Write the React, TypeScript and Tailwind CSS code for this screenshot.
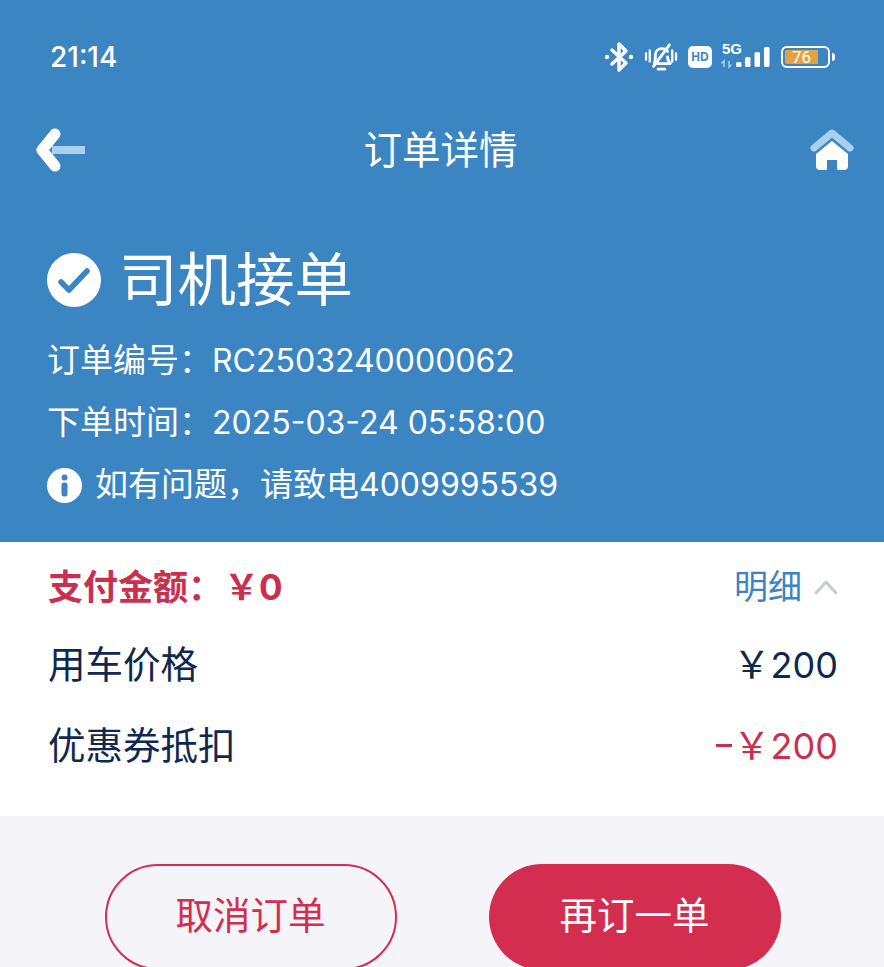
import React from 'react';

const StatusIcons = () => (
  <div className="flex items-center">
    {/* bluetooth */}
    <svg width="30" height="32" viewBox="0 0 30 32" fill="none" stroke="#fff" strokeWidth="3.4" strokeLinecap="round" strokeLinejoin="round">
      <path d="M8 9 22 22 15 29V3l7 7L8 23" />
      <circle cx="3" cy="16" r="2.2" fill="#fff" stroke="none" />
      <circle cx="27" cy="16" r="2.2" fill="#fff" stroke="none" />
    </svg>
    {/* muted bell */}
    <svg className="ml-[10px]" width="34" height="30" viewBox="0 0 36 32" fill="none" stroke="#fff" strokeWidth="3" strokeLinecap="round" strokeLinejoin="round">
      <path d="M2 12v7M6 9v12M34 12v7M30 9v12" strokeWidth="2.4" />
      <path d="M11 22c1-2 1-5 1-8 0-4 3-7 7-7 3 0 5 1 6 3M25 16c0 3 1 5 3 7H14" />
      <path d="M27 3 10 26" />
      <path d="M15 29h7" />
    </svg>
    <div className="ml-[10px] flex h-[22px] w-[24px] items-center justify-center rounded-[5px] bg-white text-[12px] leading-none font-extrabold text-[#3b85c3] [font-family:'Liberation_Sans',sans-serif]">
      HD
    </div>
    <div className="relative ml-[9px] h-[28px] w-[50px]">
      <span className="absolute top-[-2px] left-[1px] text-[15px] leading-[16px] font-bold text-white [font-family:'Liberation_Sans',sans-serif]">5G</span>
      <svg className="absolute top-0 left-0" width="50" height="28" viewBox="0 0 50 28" fill="#fff">
        <rect x="15" y="19" width="5.5" height="5" rx="1.5" />
        <rect x="24" y="14" width="5.5" height="10" rx="1.5" />
        <rect x="33.5" y="9" width="5.5" height="15" rx="1.5" />
        <rect x="43" y="4" width="5.5" height="20" rx="1.5" />
        <path d="M3 24v-6l-2.500 2.500M8 18v6l2.500-2.500" stroke="#fff" strokeOpacity="0.55" fill="none" strokeWidth="1.6" />
      </svg>
    </div>
    <div className="ml-[10px] flex h-[22px] w-[49px] items-center rounded-[6px] border-2 border-white p-[2px]">
      <div className="flex h-full w-[33px] items-center justify-center rounded-l-[2px] bg-[#e0a245] text-[17px] leading-none text-white [font-family:'Roboto',sans-serif]">
        76
      </div>
    </div>
    <div className="ml-[2px] h-[8px] w-[3px] rounded-r-full bg-white" />
  </div>
);

const Row = ({ label, children }: { label: string; children: React.ReactNode }) => (
  <div className="flex h-[81px] items-center justify-between text-[37.5px] leading-none">
    <span className="text-[#0f2850]">{label}</span>
    {children}
  </div>
);

export default function App() {
  return (
    <div className="flex h-[967px] flex-col overflow-hidden bg-[#f4f4f9] [font-family:'Inter','Noto_Sans_CJK_SC',sans-serif]">
      <header className="h-[542px] shrink-0 bg-[#3b85c3] text-white">
        <div className="flex h-[114px] items-center justify-between pr-[49px] pl-[50px]">
          <span className="text-[28px] leading-none font-medium">21:14</span>
          <StatusIcons />
        </div>

        <div className="grid h-[72px] grid-cols-[1fr_auto_1fr] items-center pr-[30px] pl-[27px]">
          <svg width="58" height="50" viewBox="0 0 58 50">
            <path d="M28 9 15 25l13 16" fill="none" stroke="#fff" strokeWidth="11" strokeLinecap="round" strokeLinejoin="round" />
            <rect x="25" y="21" width="33" height="8" fill="#a9d0ec" />
          </svg>
          <h1 className="text-[38.5px] leading-none font-normal">订单详情</h1>
          <svg className="justify-self-end" width="44" height="44" viewBox="0 0 44 44">
            <path d="M4 20 22 5l18 15" fill="none" stroke="#a9d0ec" strokeWidth="7" strokeLinecap="round" strokeLinejoin="round" />
            <path d="M22 13 38 26v12a4 4 0 0 1-4 4H27V32h-10v10H10a4 4 0 0 1-4-4V26z" fill="#fff" />
          </svg>
        </div>

        <div className="mt-[65px] flex items-center pl-[47px]">
          <svg width="54" height="54" viewBox="0 0 54 54">
            <circle cx="27" cy="27" r="27" fill="#fff" />
            <path d="M14 29l8 8 18-19" fill="none" stroke="#3b85c3" strokeWidth="5.5" strokeLinecap="round" strokeLinejoin="round" />
          </svg>
          <h2 className="ml-[18px] text-[58.5px] leading-none font-normal">司机接单</h2>
        </div>

        <div className="mt-[19px] flex flex-col pl-[47px] text-[33px]">
          <p className="h-[62px] leading-[62px]">订单编号：<span className="text-[32px]">RC2503240000062</span></p>
          <p className="h-[63px] leading-[63px]">下单时间：<span className="text-[32px]">2025-03-24 05:58:00</span></p>
          <div className="flex h-[63px] items-center">
            <svg width="35" height="35" viewBox="0 0 35 35">
              <circle cx="17.5" cy="17.5" r="17.5" fill="#fff" />
              <circle cx="17.5" cy="9.500" r="3" fill="#3b85c3" />
              <rect x="14.5" y="14.5" width="6" height="14" rx="2.5" fill="#3b85c3" />
            </svg>
            <span className="ml-[13px]">如有问题，请致电<span className="text-[32px]">4009995539</span></span>
          </div>
        </div>
      </header>

      <section className="h-[274px] shrink-0 bg-white pt-[20px] pr-[46px] pl-[48px]">
        <div className="flex h-[50px] items-center justify-between">
          <span className="text-[35px] leading-none font-bold text-[#c9304f]">支付金额：<span className="ml-[1px]">￥0</span></span>
          <div className="flex items-center">
            <span className="text-[34px] leading-none text-[#3b85c3]">明细</span>
            <svg className="ml-[12px]" width="24" height="16" viewBox="0 0 24 16" fill="none" stroke="#c8ccd0" strokeWidth="3" strokeLinecap="round" strokeLinejoin="round">
              <path d="M2 14 12 3l10 11" />
            </svg>
          </div>
        </div>
        <div className="mt-[12px]">
          <Row label="用车价格">
            <span className="text-[#0f2850]">￥<span className="text-[36px]">200</span></span>
          </Row>
          <Row label="优惠券抵扣">
            <span className="flex items-center text-[#c9304f]">
              <span className="mr-[1px] h-[3px] w-[16px] bg-[#c9304f]" />
              ￥<span className="text-[36px]">200</span>
            </span>
          </Row>
        </div>
      </section>

      <div className="flex justify-center gap-[92px] pt-[48px] pl-[1px]">
        <button className="h-[106px] w-[292px] shrink-0 rounded-[53px] border-2 border-[#d32d50] pb-[2px] text-[37.5px] leading-none text-[#d32d50]">取消订单</button>
        <button className="h-[106px] w-[292px] shrink-0 rounded-[53px] bg-[#d32d50] pb-[2px] text-[37.5px] leading-none text-white">再订一单</button>
      </div>
    </div>
  );
}
